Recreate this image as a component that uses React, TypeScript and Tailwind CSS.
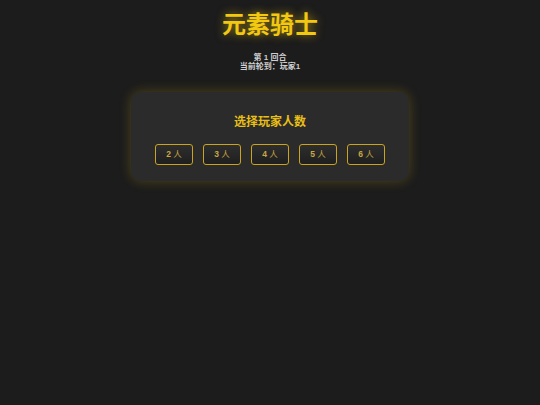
const counts = [2, 3, 4, 5, 6];

const App = () => {
  return (
    <div
      className="min-h-[405px] w-full bg-[#1c1c1c] flex flex-col items-center"
      style={{ fontFamily: '"Liberation Sans", "Noto Sans CJK SC", sans-serif' }}
    >
      <h1 className="mt-[10px] text-[24px] leading-[30px] font-bold text-[#f2c811] [text-shadow:0_0_8px_rgba(242,200,17,0.6)]">
        元素骑士
      </h1>

      <div className="mt-[13px] flex flex-col items-center text-[8px] leading-[9px] font-bold text-[#cfcfcf]">
        <p>第 1 回合</p>
        <p>当前轮到：玩家1</p>
      </div>

      <div className="mt-[21px] w-[278px] rounded-[10px] bg-[#2b2b2b] shadow-[0_0_12px_rgba(200,165,20,0.3)] flex flex-col items-center pt-[22px] pb-[16px]">
        <h2 className="text-[12px] leading-[16px] font-bold text-[#e8bf16]">选择玩家人数</h2>
        <div className="mt-[14px] flex gap-[10px]">
          {counts.map((n) => (
            <button
              key={n}
              className="w-[38px] h-[21px] rounded-[3px] border border-[#c9a41c] bg-gradient-to-b from-[#2e2e2e] to-[#1f1f1f] text-[8.5px] text-[#c9a840]"
            >
              <span className="font-bold">{n}</span> 人
            </button>
          ))}
        </div>
      </div>
    </div>
  );
};

export default App;
